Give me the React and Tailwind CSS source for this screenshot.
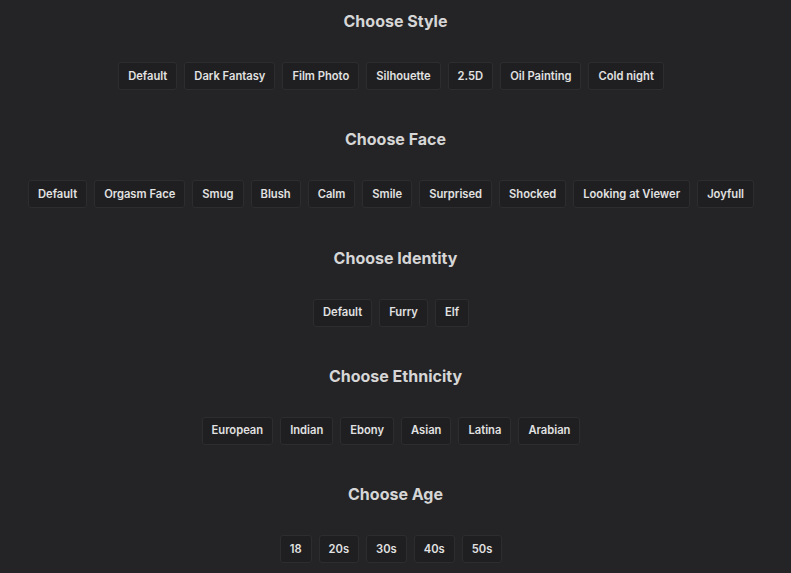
import React from 'react';

const sections = [
  {
    title: 'Choose Style',
    options: ['Default', 'Dark Fantasy', 'Film Photo', 'Silhouette', '2.5D', 'Oil Painting', 'Cold night'],
  },
  {
    title: 'Choose Face',
    options: ['Default', 'Orgasm Face', 'Smug', 'Blush', 'Calm', 'Smile', 'Surprised', 'Shocked', 'Looking at Viewer', 'Joyfull'],
  },
  {
    title: 'Choose Identity',
    options: ['Default', 'Furry', 'Elf'],
  },
  {
    title: 'Choose Ethnicity',
    options: ['European', 'Indian', 'Ebony', 'Asian', 'Latina', 'Arabian'],
  },
  {
    title: 'Choose Age',
    options: ['18', '20s', '30s', '40s', '50s'],
  },
];

const App = () => {
  return (
    <div className="min-h-screen bg-[#242426] pt-[9px] font-['Inter','Noto_Sans',sans-serif]">
      {sections.map((section) => (
        <div key={section.title} className="mb-[37.25px] flex flex-col items-center">
          <h2 className="h-6 text-base font-bold leading-6 text-[#d6d6d6]">{section.title}</h2>
          <div className="mt-[29px] flex justify-center gap-[7px] pr-[9px]">
            {section.options.map((opt) => (
              <button
                key={opt}
                className="h-7 rounded-[3px] border border-[#2d2d30] bg-[#1f1f21] px-[9px] text-[11.2px] font-semibold text-[#e2e2e2]"
              >
                {opt}
              </button>
            ))}
          </div>
        </div>
      ))}
    </div>
  );
};

export default App;
